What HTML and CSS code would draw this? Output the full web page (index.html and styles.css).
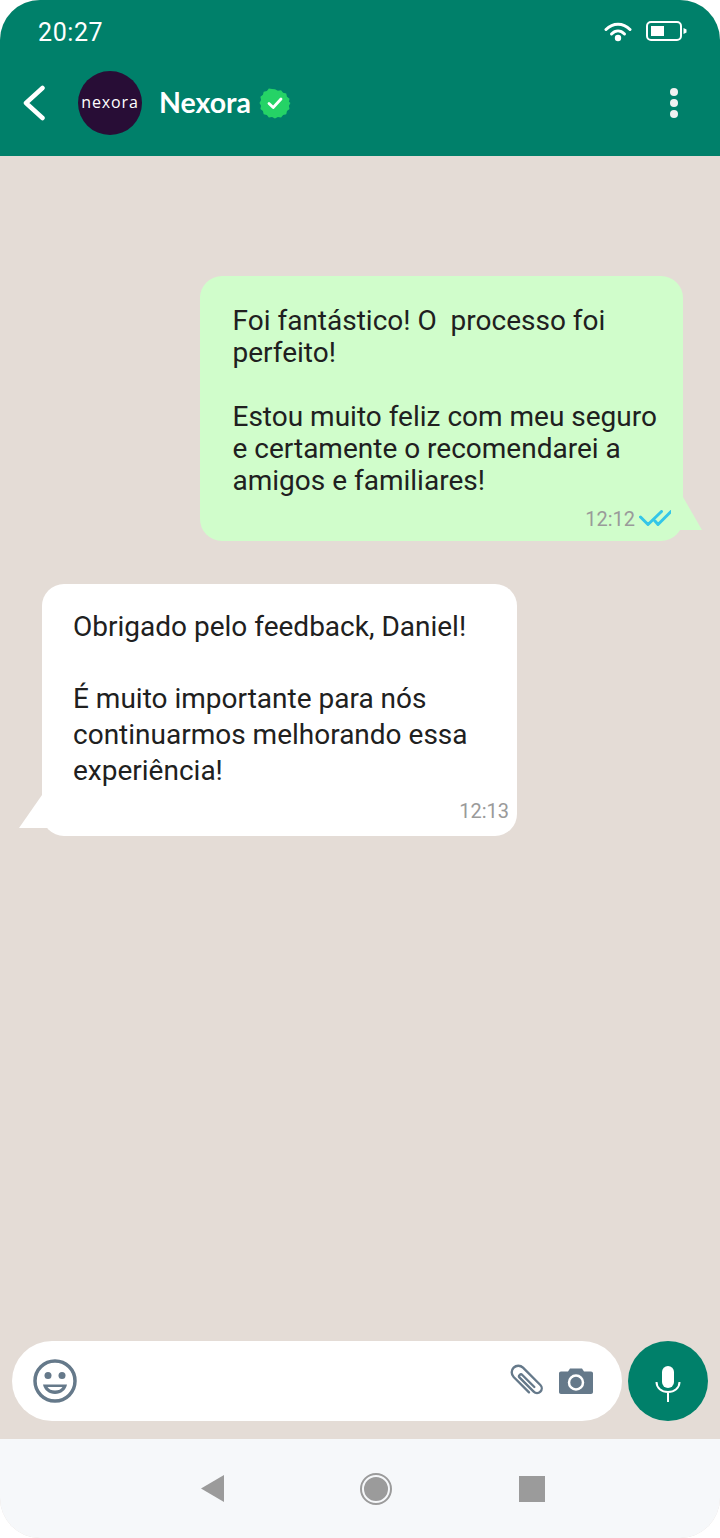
FILE: index.html
```html
<!DOCTYPE html>
<html lang="en">
<head>
  <meta charset="UTF-8" />
  <title>Nexora chat</title>
  <link rel="stylesheet" href="styles.css">
</head>
<body>
<div class="phone">

  <!-- HEADER -->
  <header class="top">
    <div class="status">
      <span class="clock">20:27</span>
      <div class="status-icons">
        <svg class="wifi" width="28" height="22" viewBox="0 0 28 22">
          <path d="M2 9.500C9 2.500 19 2.500 26 9.500" fill="none" stroke="#fff" stroke-width="3" stroke-linecap="round"/>
          <path d="M7.500 14C11.500 10 16.500 10 20.500 14" fill="none" stroke="#fff" stroke-width="3" stroke-linecap="round"/>
          <circle cx="14" cy="18" r="3.200" fill="#fff"/>
        </svg>
        <svg class="battery" width="42" height="20" viewBox="0 0 42 20">
          <rect x="1" y="1" width="34" height="18" rx="4" fill="none" stroke="#fff" stroke-width="2"/>
          <rect x="5" y="5" width="13" height="10" fill="#fff"/>
          <path d="M37.500 7L40.500 8.500V11.500L37.500 13Z" fill="#fff"/>
        </svg>
      </div>
    </div>
    <div class="contact">
      <svg class="back" width="24" height="36" viewBox="0 0 24 36">
        <path d="M20.500 3L4 18L20.500 33" fill="none" stroke="#fff" stroke-width="4.500" stroke-linecap="round" stroke-linejoin="round"/>
      </svg>
      <div class="avatar">nexora</div>
      <span class="name">Nexora</span>
      <svg class="verified" width="32" height="32" viewBox="0 0 32 32">
        <path d="M16 1l3.200 1.700 3.500-.7 2.200 2.800 3.500.8.800 3.500 2.800 2.200-.7 3.500L33 16l-1.700 3.200.7 3.500-2.800 2.200-.8 3.500-3.500.8-2.200 2.800-3.500-.7L16 33l-3.200-1.700-3.500.7-2.200-2.800-3.500-.8-.8-3.500L0 22.700l.7-3.500L-1 16l1.700-3.200-.7-3.500 2.800-2.200.8-3.500 3.500-.8L9.300 0l3.500.7z" transform="translate(1.400 1.400) scale(.91)" fill="#25d366"/>
        <path d="M10 16.500l4.200 4L22 12" fill="none" stroke="#fff" stroke-width="2.800" stroke-linecap="round" stroke-linejoin="round"/>
      </svg>
      <div class="dots"><i></i><i></i><i></i></div>
    </div>
  </header>

  <!-- MESSAGES -->
  <main class="chat">
    <div class="bubble sent">
      <p>Foi fantástico! O&nbsp; processo foi perfeito!<br><br>Estou muito feliz com meu seguro e certamente o recomendarei a amigos e familiares!</p>
      <div class="meta">
        <span>12:12</span>
        <svg width="34" height="18" viewBox="0 0 34 18">
          <path d="M1.500 7L9 14.500L22.500 1.500M16 11L19 14.500L32 1.500" fill="none" stroke="#34c6e8" stroke-width="3" stroke-linecap="round" stroke-linejoin="round"/>
        </svg>
      </div>
    </div>
    <div class="bubble received">
      <p>Obrigado pelo feedback, Daniel!<br><br>É muito importante para nós continuarmos melhorando essa experiência!</p>
      <div class="meta"><span>12:13</span></div>
    </div>
  </main>

  <!-- INPUT -->
  <div class="composer">
    <div class="field">
      <svg class="smile" width="46" height="46" viewBox="0 0 46 46">
        <circle cx="23" cy="23" r="20" fill="none" stroke="#65798a" stroke-width="3.500"/>
        <circle cx="16" cy="17.500" r="3.500" fill="#65798a"/>
        <circle cx="30" cy="17.500" r="3.500" fill="#65798a"/>
        <path d="M11 26.500H35C34 32 29 36 23 36S12 32 11 26.500Z" fill="#65798a"/>
        <path d="M15.500 29H30.500C29 31.500 26.500 32.500 23 32.500S17 31.500 15.500 29Z" fill="#fff"/>
      </svg>
      <div class="field-right">
        <svg class="clip" width="34" height="34" viewBox="-18 -18 36 36">
          <path transform="rotate(-45)" d="M-7 10V-13A7 7 0 0 1 7 -13V13A5 5 0 0 1 -3 13V-8A2 2 0 0 1 1 -8V10" fill="none" stroke="#65798a" stroke-width="2.500" stroke-linecap="round" stroke-linejoin="round"/>
        </svg>
        <svg class="camera" width="34" height="26" viewBox="0 0 34 26">
          <path d="M2 3.500H9L11 .5H23L25 3.500H32C33.200 3.500 34 4.300 34 5.500V24C34 25.200 33.200 26 32 26H2C.8 26 0 25.200 0 24V5.500C0 4.300 .8 3.500 2 3.500Z" fill="#65798a"/>
          <circle cx="17" cy="14.500" r="7" fill="none" stroke="#fff" stroke-width="2.500"/>
        </svg>
      </div>
    </div>
    <div class="mic">
      <svg width="26" height="36" viewBox="0 0 26 36">
        <rect x="7" y="0" width="12" height="22" rx="6" fill="#fff"/>
        <path d="M1.500 16C1.500 22 6.500 26 13 26S24.500 22 24.500 16M13 26V36" fill="none" stroke="#fff" stroke-width="2"/>
      </svg>
    </div>
  </div>

  <!-- ANDROID NAV -->
  <footer class="nav">
    <div class="nav-back"></div>
    <div class="nav-home"></div>
    <div class="nav-recent"></div>
  </footer>

</div>
</body>
</html>
```

FILE: styles.css
```css
body {
  margin: 0;
  background: #fff;
  font-family: Roboto, "Liberation Sans", sans-serif;
}
.phone {
  width: 720px;
  height: 1538px;
  display: flex;
  flex-direction: column;
  background: #e4dcd6;
  border-radius: 40px;
  overflow: hidden;
}

/* header */
.top {
  height: 156px;
  background: #00806a;
  color: #fff;
  box-sizing: border-box;
  padding: 0 0 0 22px;
}
.status {
  height: 62px;
  display: flex;
  justify-content: space-between;
  align-items: center;
  padding: 0 32px 0 16px;
}
.clock {
  font-size: 25px;
  letter-spacing: 0.6px;
  position: relative;
  top: 1px;
}
.status-icons {
  display: flex;
  align-items: center;
  gap: 14px;
}
.contact {
  height: 64px;
  margin-top: 9px;
  display: flex;
  align-items: center;
}
.back {
  margin-right: 32px;
}
.avatar {
  width: 64px;
  height: 64px;
  border-radius: 50%;
  background: #280d36;
  color: #fff;
  font-family: "Open Sans", sans-serif;
  font-size: 16px;
  letter-spacing: 0.9px;
  line-height: 62px;
  text-align: center;
  margin-right: 18px;
}
.name {
  font-family: Lato, sans-serif;
  font-size: 28.500px;
  font-weight: 700;
  margin-left: -1px;
  position: relative;
  top: -1px;
}
.verified {
  margin-left: 8px;
}
.dots {
  margin-left: auto;
  margin-right: 42px;
  display: flex;
  flex-direction: column;
  gap: 3px;
}
.dots i {
  width: 8px;
  height: 8px;
  border-radius: 50%;
  background: #f1f1f1;
}

/* messages */
.chat {
  flex: 1;
  display: flex;
  flex-direction: column;
  padding: 120px 37px 0 42px;
}
.bubble {
  position: relative;
  box-sizing: border-box;
  font-size: 28px;
  line-height: 32px;
  color: #202020;
  border-radius: 22px;
}
.bubble p {
  margin: 0;
}
.sent {
  width: 483px;
  height: 265px;
  align-self: flex-end;
  background: #d0fdcb;
  padding: 29px 20px 0 32.500px;
}
.sent::after {
  content: "";
  position: absolute;
  right: -19px;
  bottom: 11px;
  width: 31px;
  height: 33px;
  background: #d0fdcb;
  clip-path: polygon(0 0, 12px 0, 100% 100%, 0 100%);
}
.received {
  width: 475px;
  height: 252px;
  margin-top: 43px;
  background: #fff;
  padding: 25px 30px 0 31px;
  line-height: 36px;
}
.received::after {
  content: "";
  position: absolute;
  left: -23px;
  bottom: 8px;
  width: 35px;
  height: 33px;
  background: #fff;
  clip-path: polygon(23px 0, 100% 0, 100% 100%, 0 100%);
}
.meta {
  position: absolute;
  right: 8px;
  bottom: 15px;
  display: flex;
  align-items: center;
  gap: 4px;
  font-size: 20px;
  line-height: 20px;
  color: #9a9a9a;
}
.sent .meta {
  right: 10px;
  bottom: 12px;
}

/* input */
.composer {
  display: flex;
  align-items: center;
  gap: 6px;
  padding: 0 12px 18px;
}
.field {
  flex: 1;
  height: 80px;
  background: #fff;
  border-radius: 40px;
  display: flex;
  align-items: center;
  justify-content: space-between;
  padding: 0 29px 0 20px;
}
.field-right {
  display: flex;
  align-items: center;
  gap: 15px;
}
.mic {
  width: 80px;
  height: 80px;
  border-radius: 50%;
  background: #00806a;
  display: flex;
  align-items: center;
  justify-content: center;
}
.mic svg {
  margin-top: 6px;
}

/* android nav */
.nav {
  height: 99px;
  box-sizing: border-box;
  background: #f6f8fa;
  display: flex;
  align-items: center;
  padding-left: 201px;
}
.nav-back {
  width: 23px;
  height: 27px;
  background: #9b9b9b;
  clip-path: polygon(100% 0, 100% 100%, 0 50%);
}
.nav-home {
  width: 24px;
  height: 24px;
  margin-left: 138px;
  border-radius: 50%;
  background: #9b9b9b;
  border: 2px solid #f6f8fa;
  outline: 2px solid #9b9b9b;
}
.nav-recent {
  width: 26px;
  height: 26px;
  margin-left: 129px;
  background: #9b9b9b;
}
```
